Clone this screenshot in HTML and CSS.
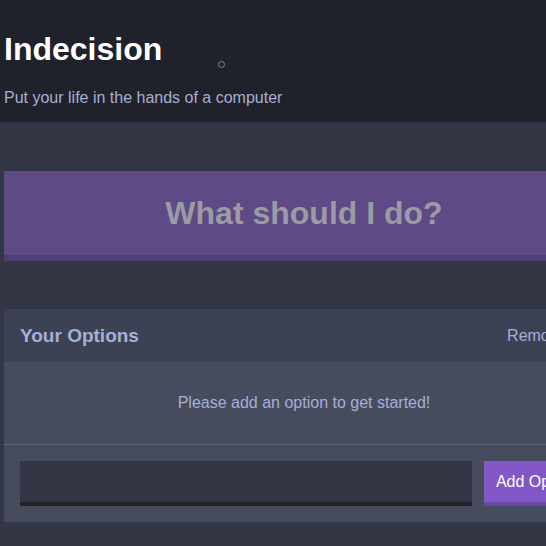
FILE: index.html
```html
<!DOCTYPE html>
<html lang="en">
<head>
<meta charset="utf-8">
<title>Indecision</title>
<link rel="stylesheet" href="styles.css">
</head>
<body>
<header class="header">
  <div class="container">
    <h1 class="header__title">Indecision</h1>
    <p class="header__subtitle">Put your life in the hands of a computer</p>
  </div>
  <span class="cursor-ring"></span>
</header>
<main class="container">
  <button class="big-button" disabled>What should I do?</button>
  <section class="widget">
    <div class="widget-header">
      <h3 class="widget-header__title">Your Options</h3>
      <button class="button--link">Remove All</button>
    </div>
    <p class="widget__message">Please add an option to get started!</p>
    <form class="add-option">
      <input class="add-option__input" type="text" name="option">
      <button class="button" type="button">Add Option</button>
    </form>
  </section>
</main>
</body>
</html>
```
FILE: styles.css
```css
* { box-sizing: border-box; }
html, body { overflow: hidden; }
body {
  margin: 0;
  background: #333745;
  font-family: "Liberation Sans", Arial, sans-serif;
  color: #ffffff;
}
.container {
  width: 600px;
  margin-left: 4px;
}
.header {
  position: relative;
  background: #20222b;
  padding: 30px 0 15px;
}
.header__title {
  margin: 0;
  font-size: 32px;
  line-height: 38px;
  font-weight: bold;
  color: #ffffff;
}
.header__subtitle {
  margin: 21px 0 0;
  font-size: 16px;
  line-height: 18px;
  color: #a5afd7;
}
.cursor-ring {
  position: absolute;
  left: 218px;
  top: 61px;
  width: 7px;
  height: 7px;
  border: 1.5px solid #80859a;
  border-radius: 50%;
}
.big-button {
  display: flex;
  align-items: center;
  justify-content: center;
  width: 100%;
  height: 90px;
  margin: 49px 0 48px;
  padding: 0;
  background: #5d4a87;
  border: none;
  border-bottom: 6px solid #4f3e76;
  font-family: inherit;
  font-size: 32px;
  font-weight: bold;
  color: #9a9ba3;
}
.widget {
  background: #464b5e;
  margin-bottom: 24px;
}
.widget-header {
  display: flex;
  align-items: center;
  justify-content: space-between;
  height: 53px;
  padding: 0 16px;
  background: #3c4253;
}
.widget-header__title {
  margin: 0;
  font-size: 19px;
  font-weight: bold;
  color: #a5afd7;
}
.button--link {
  background: none;
  border: none;
  padding: 0;
  font-family: inherit;
  font-size: 16px;
  color: #a5afd7;
}
.widget__message {
  margin: 0;
  padding: 32px 16px;
  line-height: 18px;
  font-size: 16px;
  text-align: center;
  color: #a5afd7;
  border-bottom: 1px solid #5d6179;
}
.add-option {
  display: flex;
  gap: 12px;
  padding: 16px;
}
.add-option__input {
  flex: 1;
  height: 45px;
  background: #333745;
  border: none;
  border-bottom: 4px solid #202228;
  color: #a5afd7;
  font-family: inherit;
  font-size: 16px;
  padding: 0 12px;
}
.button {
  height: 45px;
  padding: 0 12px;
  background: #8357c5;
  border: none;
  border-bottom: 4px solid #6a46a8;
  font-family: inherit;
  font-size: 16px;
  color: #ffffff;
  white-space: nowrap;
}
```
